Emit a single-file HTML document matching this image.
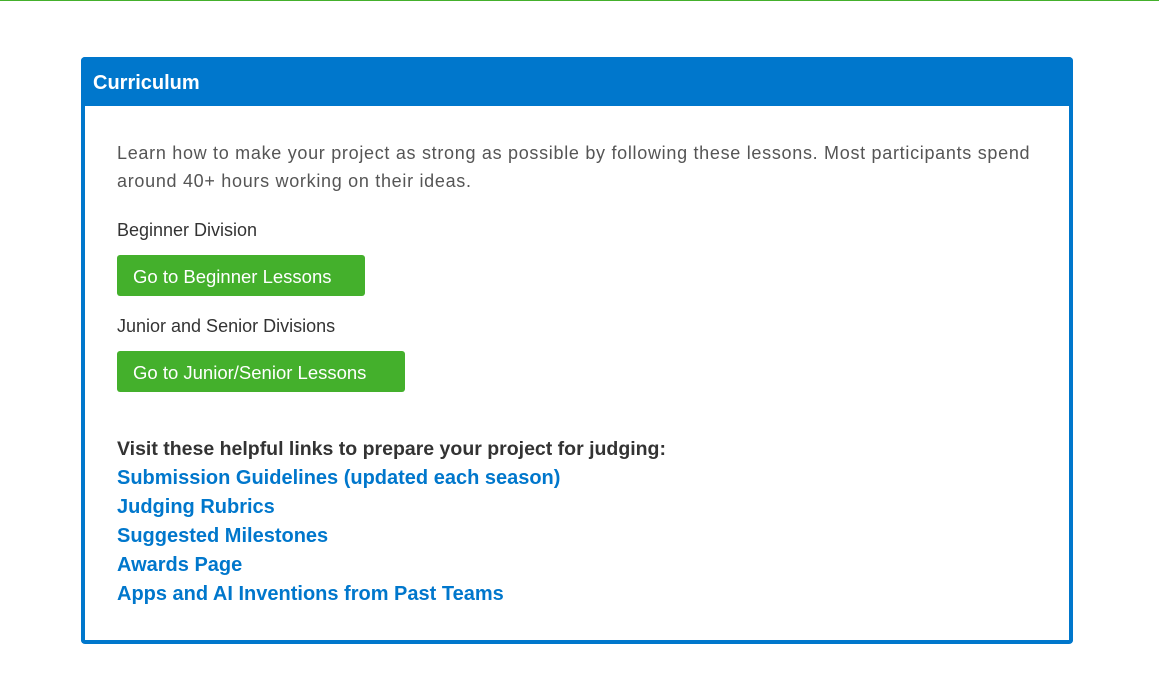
<!DOCTYPE html>
<html><head><style>
body{margin:0;background:#fff;font-family:"Liberation Sans",sans-serif;width:1159px;height:699px;overflow:hidden;position:relative}
.top{position:absolute;top:0;left:0;right:0;height:1px;background:#44b02c}
.card{position:absolute;left:81px;top:57px;width:984px;height:583px;border:4px solid #0077cc;border-top:0;border-radius:4px;}
.hd{position:absolute;left:-4px;top:0;width:992px;height:49px;background:#0077cc;border-radius:4px 4px 0 0;color:#fff;font-weight:bold;font-size:20px;line-height:52px;padding-left:12px;box-sizing:border-box}
.p{position:absolute;left:32px;top:82px;width:940px;font-size:18px;letter-spacing:0.7px;line-height:28px;color:#555;white-space:nowrap}
.l{position:absolute;left:32px;font-size:18px;color:#333}
.b{position:absolute;left:32px;height:41px;background:#44b02c;color:#fff;border-radius:3px;font-size:18.5px;line-height:43px;padding:0 16px}
.lk{position:absolute;left:32px;top:378px;font-weight:bold;font-size:20px;line-height:29px;color:#0077cc}
.lk div:first-child{color:#333;font-size:19.5px}
</style></head><body>
<div class="top"></div>
<div class="card">
<div class="hd">Curriculum</div>
<div class="p">Learn how to make your project as strong as possible by following these lessons. Most participants spend<br>around 40+ hours working on their ideas.</div>
<div class="l" style="top:163px">Beginner Division</div>
<div class="b" style="top:198px;width:216px">Go to Beginner Lessons</div>
<div class="l" style="top:259px">Junior and Senior Divisions</div>
<div class="b" style="top:294px;width:256px">Go to Junior/Senior Lessons</div>
<div class="lk">
<div>Visit these helpful links to prepare your project for judging:</div>
<div>Submission Guidelines (updated each season)</div>
<div>Judging Rubrics</div>
<div>Suggested Milestones</div>
<div>Awards Page</div>
<div>Apps and AI Inventions from Past Teams</div>
</div>
</div>
</body></html>
